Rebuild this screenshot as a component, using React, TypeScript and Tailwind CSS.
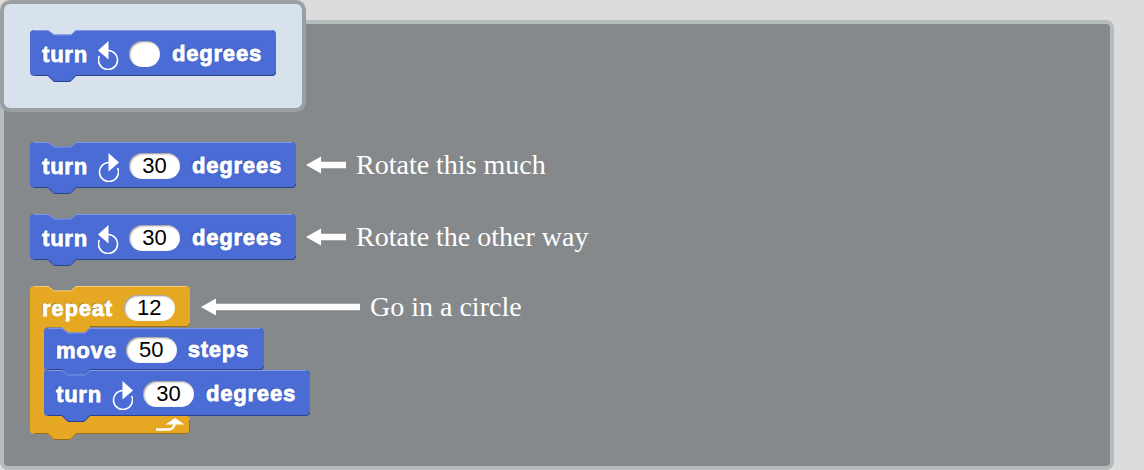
import React from "react";

const palette = {
  blue: { fill: "#4a6cd4", light: "#8198e4", dark: "#2c4288" },
  orange: { fill: "#e6a822", light: "#f2cd78", dark: "#94701c" },
};

const topEdge = (w: number) =>
  `M4 0.5 L18 0.5 L24 5 L41 5 L46 0.5 L${w - 4} 0.5`;

const blockPath = (w: number, h: number) =>
  `M4 0 L18 0 L24 4.5 L41 4.5 L46 0 L${w - 4} 0 Q${w} 0 ${w} 4 L${w} ${h - 4} Q${w} ${h} ${w - 4} ${h} L46 ${h} L40 ${h + 6} L24 ${h + 6} L18 ${h} L4 ${h} Q0 ${h} 0 ${h - 4} L0 4 Q0 0 4 0 Z`;

const bottomEdge = (w: number, h: number) =>
  `M${w - 0.5} ${h - 4} Q${w - 0.5} ${h - 0.5} ${w - 4} ${h - 0.5} L46 ${h - 0.5} L40 ${h + 5.5} L24 ${h + 5.5} L18 ${h - 0.5} L4 ${h - 0.5}`;

const Label = ({ children }: { children: React.ReactNode }) => (
  <span className="inline-block pt-[3px] font-['Liberation_Sans',Arial,sans-serif] text-[22px] leading-none font-bold tracking-[0.8px] text-white [-webkit-text-stroke:0.8px_#fff] [text-shadow:-1px_-1px_1px_rgba(0,0,0,0.3)]">
    {children}
  </span>
);

const Slot = ({ value, width = 51 }: { value?: string; width?: number }) => (
  <span
    className="mt-px flex h-[26px] items-center justify-center rounded-full bg-white pt-px font-['Liberation_Sans',Arial,sans-serif] text-[22px] leading-none text-black shadow-[inset_1px_1px_2px_rgba(0,0,0,0.45)]"
    style={{ width }}
  >
    {value}
  </span>
);

const TurnIcon = ({ flip }: { flip?: boolean }) => (
  <svg width="21" height="29" viewBox="0 0 21 29" className={flip ? "mt-1 -scale-x-100" : "mt-1"}>
    <path d="M19.6 15 A9.5 9.5 0 1 1 11 9.5" fill="none" stroke="#fff" strokeWidth="1.6" />
    <path d="M10.5 0 L21 9.5 L10.5 18.5 Z" fill="#fff" />
  </svg>
);

const Block = ({
  width,
  height,
  gap = 10,
  children,
}: {
  width: number;
  height: number;
  gap?: number;
  children: React.ReactNode;
}) => (
  <div className="relative flex shrink-0 items-center pl-3" style={{ width, height, gap }}>
    <svg width={width} height={height + 6} className="absolute top-0 left-0 overflow-visible">
      <path d={blockPath(width, height)} fill={palette.blue.fill} />
      <path d={topEdge(width)} fill="none" stroke={palette.blue.light} />
      <path d={bottomEdge(width, height)} fill="none" stroke={palette.blue.dark} />
    </svg>
    <div className="relative flex items-center" style={{ gap }}>
      {children}
    </div>
  </div>
);

const TurnBlock = ({ flip, width = 266 }: { flip?: boolean; width?: number }) => (
  <Block width={width} height={46}>
    <Label>turn</Label>
    <TurnIcon flip={flip} />
    <Slot value="30" />
    <span className="ml-0.5">
      <Label>degrees</Label>
    </span>
  </Block>
);

const Arrow = ({ length }: { length: number }) => (
  <svg width={length} height="18" viewBox={`0 0 ${length} 18`} className="shrink-0">
    <path d={`M0 9 L15 0.5 L15 5.7 L${length} 5.7 L${length} 12.3 L15 12.3 L15 17.5 Z`} fill="#fff" />
  </svg>
);

const Caption = ({ children }: { children: React.ReactNode }) => (
  <span className="font-['Liberation_Serif','Times_New_Roman',serif] text-[28px] leading-none text-white">
    {children}
  </span>
);

const cPath =
  "M4 0 L18 0 L24 4.5 L41 4.5 L46 0 L156 0 Q160 0 160 4 L160 37 Q160 41 156 41 L60 41 L54 47 L38 47 L32 41 L18 41 Q14 41 14 45 L14 126 Q14 130 18 130 L156 130 Q160 130 160 134 L160 144 Q160 148 156 148 L46 148 L40 154 L24 154 L18 148 L4 148 Q0 148 0 144 L0 4 Q0 0 4 0 Z";

const RepeatBlock = () => (
  <div className="relative w-[160px] shrink-0">
    <svg width="160" height="154" className="absolute top-0 left-0 overflow-visible">
      <path d={cPath} fill={palette.orange.fill} />
      <path d={topEdge(160)} fill="none" stroke={palette.orange.light} />
      <path
        d="M159.5 134 L159.5 144 Q159.5 147.5 156 147.5 L46 147.5 L40 153.5 L24 153.5 L18 147.5 L4 147.5"
        fill="none"
        stroke={palette.orange.dark}
      />
      <path d="M159.5 37 Q159.5 40.5 156 40.5 L60 40.5" fill="none" stroke={palette.orange.dark} />
    </svg>
    <div className="relative flex h-[42px] items-center gap-[11px] pl-3">
      <Label>repeat</Label>
      <Slot value="12" />
    </div>
    <div className="relative flex flex-col pl-[14px]">
      <Block width={220} height={42} gap={9}>
        <Label>move</Label>
        <Slot value="50" />
        <span className="ml-0.5">
          <Label>steps</Label>
        </span>
      </Block>
      <TurnBlock />
    </div>
    <div className="relative flex h-[18px] items-start justify-end pt-[2px] pr-[5px]">
      <svg width="29" height="13" viewBox="0 0 29 13">
        <path d="M0 11.5 L13 11.5 Q16 11.5 18 8 L19 5" fill="none" stroke="#fff" strokeWidth="2.4" />
        <path d="M9.5 6.5 L19 0 L28.5 6.5 Z" fill="#fff" />
      </svg>
    </div>
  </div>
);

export default function App() {
  return (
    <div className="relative h-[470px] w-[1144px] overflow-hidden bg-[#dcdcdc] pt-5">
      <div className="flex h-[450px] w-[1114px] flex-col rounded-[8px] border-4 border-[#b6bbbd] bg-[#85898b] pt-[118px] pl-[26px]">
        <div className="flex items-center">
          <TurnBlock />
          <div className="ml-[10px]">
            <Arrow length={40} />
          </div>
          <div className="ml-[10px]">
            <Caption>Rotate this much</Caption>
          </div>
        </div>
        <div className="mt-[26px] flex items-center">
          <TurnBlock flip />
          <div className="ml-[10px]">
            <Arrow length={40} />
          </div>
          <div className="ml-[10px]">
            <Caption>Rotate the other way</Caption>
          </div>
        </div>
        <div className="mt-[26px] flex items-start">
          <RepeatBlock />
          <div className="flex h-[42px] items-center">
            <div className="ml-[11px]">
              <Arrow length={159} />
            </div>
            <div className="ml-[10px]">
              <Caption>Go in a circle</Caption>
            </div>
          </div>
        </div>
      </div>
      <div className="absolute top-0 left-0 h-[112px] w-[306px] rounded-[10px] border-4 border-[#9a9fa1] bg-[#d8e2ec] pt-[26px] pl-[26px]">
        <Block width={246} height={46}>
          <Label>turn</Label>
          <TurnIcon flip />
          <Slot width={31} />
          <span className="ml-0.5">
            <Label>degrees</Label>
          </span>
        </Block>
      </div>
    </div>
  );
}
